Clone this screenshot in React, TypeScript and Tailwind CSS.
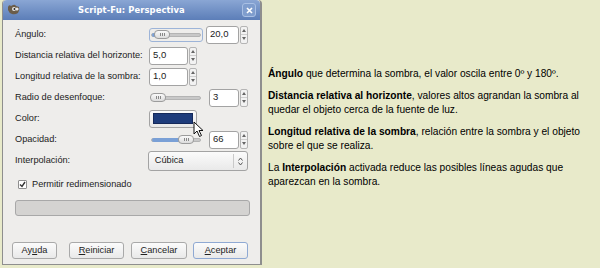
import React from "react";

const dlg = { fontFamily: '"Liberation Sans", Arial, sans-serif' } as React.CSSProperties;

function Spin({ value, w }: { value: string; w: string }) {
  return (
    <div className="flex items-stretch h-[18px]">
      <div className={`${w} bg-white border border-[#a3a3a3] rounded-[3px] flex items-center pl-[3px] text-[9.5px] text-[#222]`}>{value}</div>
      <div className="w-[8px] ml-[1px] border border-[#b5b5b5] rounded-[2px] bg-[#f2f2f2] flex flex-col">
        <div className="flex-1 flex items-center justify-center border-b border-[#cfcfcf]">
          <svg width="4" height="3" viewBox="0 0 4 3"><path d="M0 3 L2 0 L4 3Z" fill="#666" /></svg>
        </div>
        <div className="flex-1 flex items-center justify-center">
          <svg width="4" height="3" viewBox="0 0 4 3"><path d="M0 0 L2 3 L4 0Z" fill="#666" /></svg>
        </div>
      </div>
    </div>
  );
}

function Thumb() {
  return (
    <div className="w-[16px] h-[9px] rounded-[4px] border border-[#9c9c9c] bg-gradient-to-b from-[#fafafa] to-[#dcdcdc] flex items-center justify-center gap-[1px]">
      <div className="w-[1px] h-[3px] bg-[#888]" />
      <div className="w-[1px] h-[3px] bg-[#888]" />
      <div className="w-[1px] h-[3px] bg-[#888]" />
    </div>
  );
}

function Slider({ fill, focus }: { fill: number; focus?: boolean }) {
  return (
    <div className={`w-[54px] h-[14px] flex items-center rounded-[3px] ${focus ? "border border-[#9db4d8]" : "border border-transparent"}`}>
      <div className="relative w-[50px] h-[4px] ml-[1px] rounded-full bg-[#c8c8c8] border border-[#b4b4b4]">
        {fill > 0 && <div className="absolute left-0 top-[-1px] h-[4px] rounded-full bg-[#7aa0d6]" style={{ width: fill }} />}
        <div className="absolute top-[-4px]" style={{ left: fill - 2 }}><Thumb /></div>
      </div>
    </div>
  );
}

function Btn({ children, w, focus }: { children: React.ReactNode; w: string; focus?: boolean }) {
  return (
    <div className={`${w} h-[17px] rounded-[3px] border ${focus ? "border-[#8fa9d3]" : "border-[#a9a9a9]"} bg-gradient-to-b from-[#fbfbfb] to-[#e9e9e9] flex items-center justify-center text-[9.2px] text-[#222]`}>
      {children}
    </div>
  );
}

export default function App() {
  return (
    <div className="w-[600px] h-[268px] bg-[#e8eaca] flex overflow-hidden">
      <div className="ml-[2px] w-[260px] h-[265px] flex flex-col border-r-2 border-b border-l border-[#8e8e8e] rounded-t-[4px] bg-[#eeedeb]" style={dlg}>
        {/* title bar */}
        <div className="h-[20px] rounded-t-[4px] bg-gradient-to-b from-[#8aa6d4] to-[#5c7eb8] flex items-center px-[4px]">
          <svg width="14" height="12" viewBox="0 0 14 12">
            <path d="M1 3 Q2 0 4 2 L6 1 Q8 0 9 2 L12 3 Q13 6 11 9 Q8 11 5 10 Q2 9 1 6Z" fill="#6b5d4a" />
            <circle cx="7" cy="5" r="2" fill="#e8e8e8" />
            <circle cx="7.5" cy="5" r="1" fill="#222" />
            <circle cx="10" cy="5" r="1.6" fill="#e8e8e8" />
          </svg>
          <div className="flex-1 text-center text-white font-bold text-[8.4px] tracking-[0.1px]" style={{ fontFamily: '"DejaVu Sans", sans-serif' }}>Script-Fu: Perspectiva</div>
          <div className="w-[14px] h-[14px] rounded-[3px] border border-[#a9c0e4] bg-[#7f9dcd] flex items-center justify-center">
            <svg width="7" height="7" viewBox="0 0 7 7"><path d="M1 1 L6 6 M6 1 L1 6" stroke="#fff" strokeWidth="1.6" /></svg>
          </div>
        </div>
        {/* body */}
        <div className="flex-1 flex flex-col pl-[12px] pr-[12px] text-[9.2px] text-[#222] whitespace-nowrap">
          <div className="h-[4px]" />
          <div className="h-[21px] flex items-center">
            <div className="w-[134px]">Ángulo:</div>
            <Slider fill={4} focus />
            <div className="ml-[3px]"><Spin value="20,0" w="w-[33px]" /></div>
          </div>
          <div className="h-[21px] flex items-center">
            <div className="w-[134px]">Distancia relativa del horizonte:</div>
            <Spin value="5,0" w="w-[39px]" />
          </div>
          <div className="h-[21px] flex items-center">
            <div className="w-[134px]">Longitud relativa de la sombra:</div>
            <Spin value="1,0" w="w-[39px]" />
          </div>
          <div className="h-[21px] flex items-center">
            <div className="w-[134px]">Radio de desenfoque:</div>
            <Slider fill={0} />
            <div className="ml-[6px]"><Spin value="3" w="w-[30px]" /></div>
          </div>
          <div className="h-[21px] flex items-center relative">
            <div className="w-[134px]">Color:</div>
            <div className="w-[48px] h-[18px] rounded-[3px] border border-[#a3a3a3] bg-gradient-to-b from-[#fbfbfb] to-[#e8e8e8] flex items-center justify-center">
              <div className="w-[40px] h-[11px] bg-[#1e3c7b] border border-[#15295a]" />
            </div>
            <svg className="absolute left-[178px] top-[13px]" width="12" height="17" viewBox="0 0 12 17">
              <path d="M1 1 L1 13 L4 10 L6.5 15.5 L8.5 14.5 L6 9.5 L10 9.5 Z" fill="#fff" stroke="#111" strokeWidth="1" strokeLinejoin="round" />
            </svg>
          </div>
          <div className="h-[21px] flex items-center">
            <div className="w-[134px]">Opacidad:</div>
            <Slider fill={28} />
            <div className="ml-[6px]"><Spin value="66" w="w-[30px]" /></div>
          </div>
          <div className="h-[22px] flex items-center">
            <div className="w-[134px]">Interpolación:</div>
            <div className="w-[101px] h-[20px] rounded-[3px] border border-[#a3a3a3] bg-gradient-to-b from-[#fbfbfb] to-[#e9e9e9] flex items-center pl-[6px]">
              <div className="flex-1">Cúbica</div>
              <div className="w-[1px] h-[14px] bg-[#c9c9c9]" />
              <div className="w-[13px] flex justify-center">
                <svg width="5" height="9" viewBox="0 0 5 9"><path d="M0.5 3.5 L2.5 1 L4.5 3.5 M0.5 5.5 L2.5 8 L4.5 5.5" stroke="#555" strokeWidth="1" fill="none" /></svg>
              </div>
            </div>
          </div>
          <div className="h-[22px] flex items-center pl-[3px] pt-[3px]">
            <div className="w-[9px] h-[9px] border border-[#8f8f8f] bg-white rounded-[1px] flex items-center justify-center mr-[5px]">
              <svg width="7" height="7" viewBox="0 0 7 7"><path d="M1 3.5 L3 5.5 L6 1" stroke="#333" strokeWidth="1.4" fill="none" /></svg>
            </div>
            <div>Permitir redimensionado</div>
          </div>
          <div className="h-[6px]" />
          <div className="w-[235px] h-[16px] rounded-[3px] border border-[#a8a8a8] bg-[#d4d3d1]" />
          <div className="flex-1" />
          <div className="flex items-center pb-[5px] ml-[-3px]">
            <Btn w="w-[52px]">Ay<u>u</u>da</Btn>
            <div className="ml-[12px]"><Btn w="w-[55px]"><u>R</u>einiciar</Btn></div>
            <div className="ml-[7px]"><Btn w="w-[56px]"><u>C</u>ancelar</Btn></div>
            <div className="ml-[6px]"><Btn w="w-[55px]" focus><u>A</u>ceptar</Btn></div>
          </div>
        </div>
      </div>
      <div className="w-[330px] pl-[6px] pr-[4px] pt-[67px] text-[10.2px] leading-[14px] text-black" style={{ fontFamily: '"Liberation Sans", Arial, sans-serif' }}>
        <p><b>Ángulo</b> que determina la sombra, el valor oscila entre 0º y 180º.</p>
        <p className="mt-[8px]"><b>Distancia relativa al horizonte</b>, valores altos agrandan la sombra al quedar el objeto cerca de la fuente de luz.</p>
        <p className="mt-[8px]"><b>Longitud relativa de la sombra</b>, relación entre la sombra y el objeto sobre el que se realiza.</p>
        <p className="mt-[8px]">La <b>Interpolación</b> activada reduce las posibles líneas agudas que aparezcan en la sombra.</p>
      </div>
    </div>
  );
}
